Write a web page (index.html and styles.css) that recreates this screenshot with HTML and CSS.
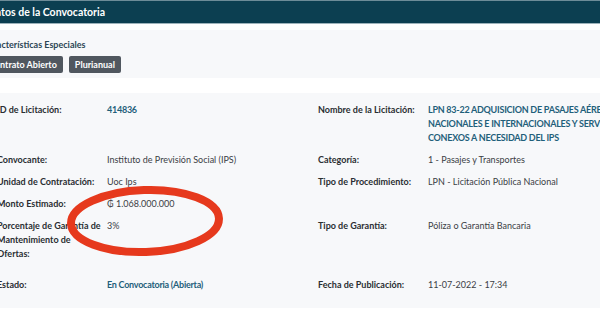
FILE: index.html
```html
<!DOCTYPE html>
<html>
<head>
  <meta charset="UTF-8">
  <title>Datos de la Convocatoria</title>
  <link rel="stylesheet" href="styles.css">
</head>
<body>
  <div class="page">
    <div class="card-header">Datos de la Convocatoria</div>

    <div class="box features">
      <h3>Características Especiales</h3>
      <div class="badges">
        <span class="badge">Contrato Abierto</span>
        <span class="badge">Plurianual</span>
      </div>
    </div>

    <div class="box details">
      <div class="grid">
        <div class="label">ID de Licitación:</div>
        <div class="value link">414836</div>
        <div class="label">Nombre de la Licitación:</div>
        <div class="value link">LPN 83-22 ADQUISICION DE PASAJES AÉREOS NACIONALES E INTERNACIONALES Y SERVICIOS CONEXOS A NECESIDAD DEL IPS</div>

        <div class="label">Convocante:</div>
        <div class="value">Instituto de Previsión Social (IPS)</div>
        <div class="label">Categoría:</div>
        <div class="value">1 - Pasajes y Transportes</div>

        <div class="label">Unidad de Contratación:</div>
        <div class="value">Uoc Ips</div>
        <div class="label">Tipo de Procedimiento:</div>
        <div class="value">LPN - Licitación Pública Nacional</div>

        <div class="label">Monto Estimado:</div>
        <div class="value">₲ 1.068.000.000</div>
        <div class="label"></div>
        <div class="value"></div>

        <div class="label">Porcentaje de Garantía de Mantenimiento de Ofertas:</div>
        <div class="value">3%</div>
        <div class="label">Tipo de Garantía:</div>
        <div class="value">Póliza o Garantía Bancaria</div>

        <div class="label spaced">Estado:</div>
        <div class="value link spaced">En Convocatoria (Abierta)</div>
        <div class="label spaced">Fecha de Publicación:</div>
        <div class="value spaced">11-07-2022 - 17:34</div>
      </div>
    </div>
  </div>

  <!-- hand drawn highlight over the amount -->
  <svg class="mark" width="170" height="90" viewBox="0 0 170 90">
    <ellipse cx="85" cy="45" rx="74" ry="31" transform="rotate(-2 85 45)" fill="none" stroke="#e6391d" stroke-width="8"/>
  </svg>
</body>
</html>
```

FILE: styles.css
```css
body {
  font-family: Lato, "Open Sans", sans-serif;
  margin: 0;
  padding: 0;
  background-color: #ffffff;
  overflow: hidden;
  position: relative;
  width: 600px;
  height: 315px;
}

.page {
  width: 760px;
  margin-left: -27px;
}

.card-header {
  background-color: #0c3f51;
  border-top: 1px solid #6d8c98;
  border-bottom: 1px solid #9db3bb;
  color: white;
  font-size: 10.5px;
  font-weight: bold;
  line-height: 22px;
  padding-left: 15px;
}

.box {
  background-color: #f7f8fa;
}

.features {
  margin-top: 6px;
  padding: 8px 10px 5px;
}

.features h3 {
  margin: 0;
  font-size: 9px;
  line-height: 14px;
  color: #2c4654;
}

.badges {
  display: flex;
  gap: 6px;
  margin-top: 4px;
}

.badge {
  background-color: #50575f;
  color: white;
  font-size: 9px;
  font-weight: bold;
  line-height: 17px;
  padding: 0 6px;
  border-radius: 2px;
}

.details {
  margin-top: 15px;
  padding: 10px 0 16px 24px;
}

.grid {
  display: grid;
  grid-template-columns: 110px 211px 110px 232px;
  row-gap: 8px;
  font-size: 9px;
  line-height: 14px;
}

.label {
  font-weight: bold;
  color: #2a2e32;
  padding-right: 6px;
}

.value {
  color: #3b4045;
}

.value.link {
  color: #1f5f7a;
  font-weight: bold;
  letter-spacing: -0.25px;
}

.spaced {
  margin-top: 9px;
}

.mark {
  position: absolute;
  left: 60px;
  top: 176px;
}
```
